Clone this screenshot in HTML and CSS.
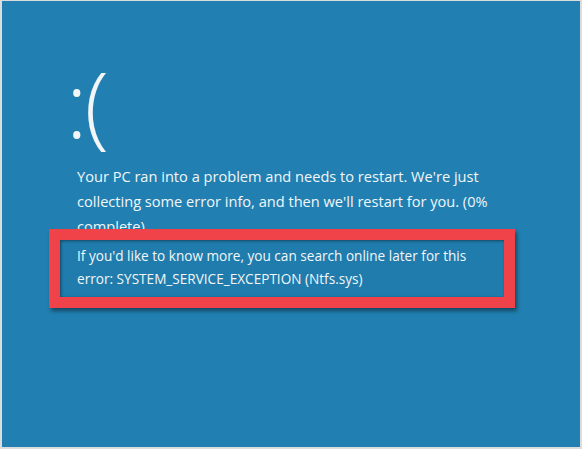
FILE: index.html
```html
<!DOCTYPE html>
<html lang="en">
<head>
  <meta charset="UTF-8">
  <meta name="viewport" content="width=device-width, initial-scale=1.0">
  <title>Your PC ran into a problem</title>
  <link rel="stylesheet" href="styles.css">
</head>
<body>
  <div class="screen">
    <div class="face">:(</div>
    <p class="message">Your PC ran into a problem and needs to restart. We're just collecting some error info, and then we'll restart for you. (0% complete)</p>
    <div class="more">
      <p>If you'd like to know more, you can search online later for this error: SYSTEM_SERVICE_EXCEPTION (Ntfs.sys)</p>
      <div class="highlight"></div>
    </div>
  </div>
</body>
</html>
```

FILE: styles.css
```css
body {
  margin: 0;
  background: #dcdcdc;
  font-family: 'Open Sans', 'Noto Sans', Arial, sans-serif;
}
.screen {
  width: 578px;
  height: 446px;
  margin: 1px 0 0 2px;
  background: #2180b1;
  color: #f2f6f9;
  padding: 57px 0 0 75px;
  box-sizing: border-box;
  overflow: hidden;
}
.face {
  font-size: 90px;
  font-weight: 300;
  line-height: 90px;
  height: 106px;
  margin-left: -11px;
  letter-spacing: -3px;
}
.message {
  width: 418px;
  margin: 0;
  font-size: 14.6px;
  line-height: 25px;
}
.more {
  position: relative;
  margin-top: 5px;
}
.more p {
  width: 420px;
  margin: 0;
  font-size: 13.6px;
  line-height: 23px;
  position: relative;
  z-index: 2;
}
/* red callout drawn over the screenshot */
.highlight {
  position: absolute;
  left: -28px;
  top: -15px;
  width: 466px;
  height: 79px;
  box-sizing: border-box;
  border: 11px solid #ef4249;
  background: rgba(20, 60, 100, 0.06);
  box-shadow: 2px 3px 4px rgba(0, 0, 0, 0.45), inset 1px 1px 3px rgba(0, 0, 0, 0.45);
  z-index: 1;
}
```
